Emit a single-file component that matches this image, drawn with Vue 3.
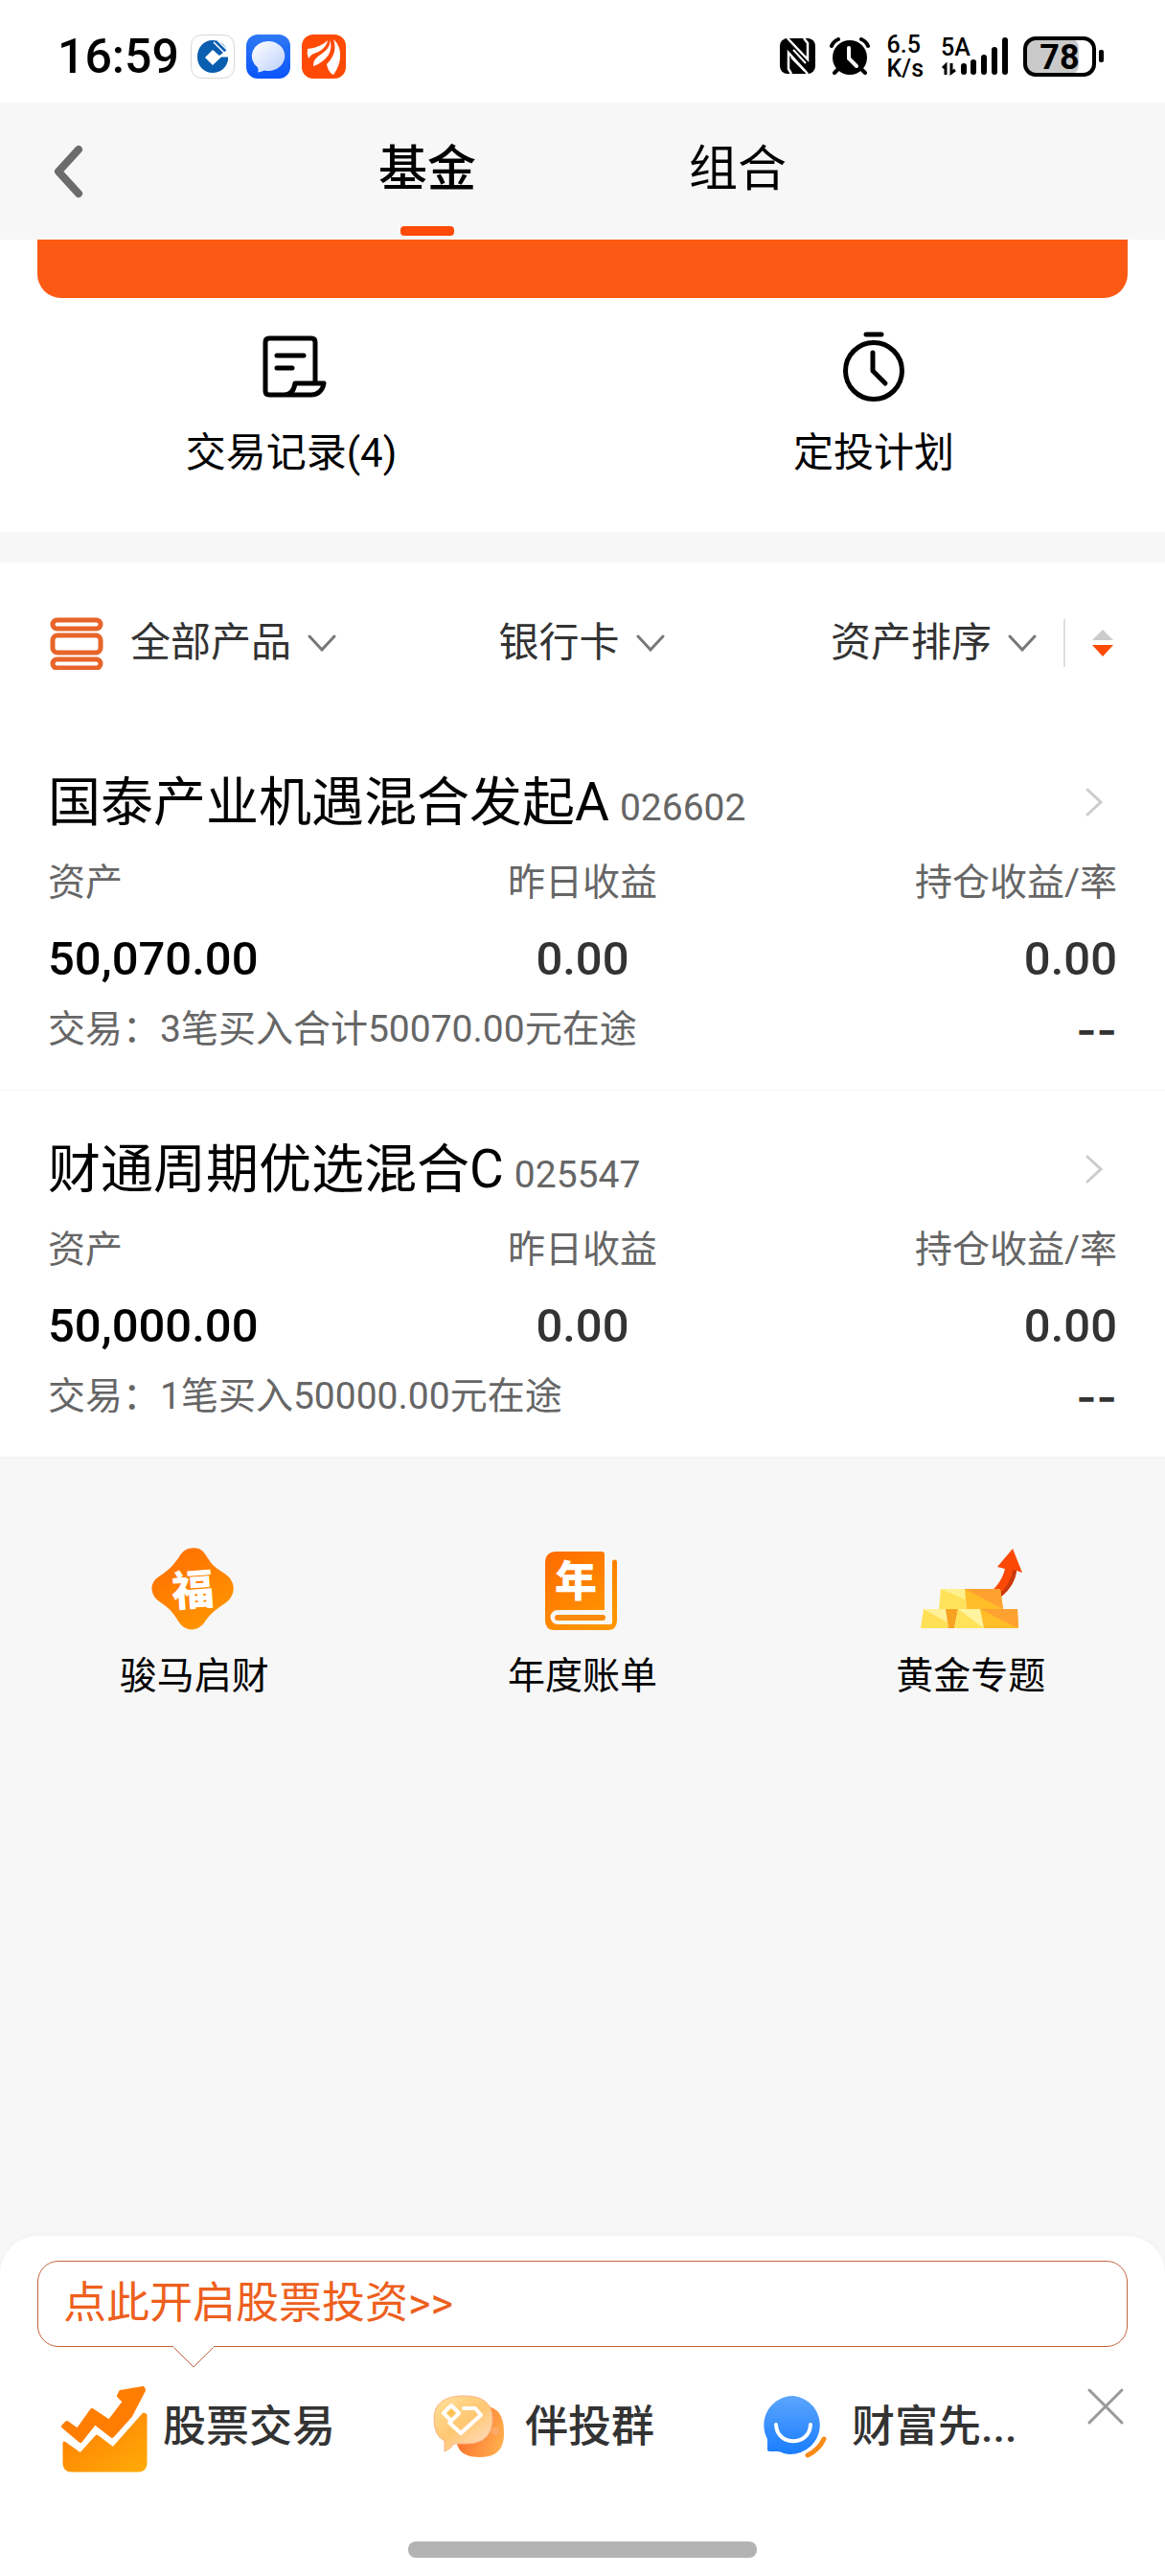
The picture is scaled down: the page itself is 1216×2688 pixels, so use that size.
<script setup>
import { ref } from 'vue'

const tabs = ['基金', '组合']
const activeTab = ref(0)

// 筛选条件
const product = ref('全部产品')
const bank = ref('银行卡')
const sort = ref('资产排序')
const sortDesc = ref(true)

const funds = ref([
  {
    name: '国泰产业机遇混合发起A',
    code: '026602',
    asset: '50,070.00',
    yesterday: '0.00',
    profit: '0.00',
    rate: '--',
    trade: '交易：3笔买入合计50070.00元在途'
  },
  {
    name: '财通周期优选混合C',
    code: '025547',
    asset: '50,000.00',
    yesterday: '0.00',
    profit: '0.00',
    rate: '--',
    trade: '交易：1笔买入50000.00元在途'
  }
])

const showPanel = ref(true)
// 信号格
const bars = [
  { x: 21, y: 33 },
  { x: 31, y: 29 },
  { x: 42, y: 24 },
  { x: 53, y: 16 },
  { x: 64, y: 6 }
]
</script>

<template>
  <div class="page">
    <!-- 状态栏 -->
    <div class="status">
      <div class="status-left">
        <span class="time">16:59</span>
        <svg class="app-icon" viewBox="0 0 46 46">
          <rect x="0.5" y="0.5" width="45" height="45" rx="11" fill="#fff" stroke="#d8d8d8" />
          <path d="M38 16C35 9 29 6 23 6C13 6 7 14 7 23.500C7 33 14 40 23 40C31 40 37 35 39 27V23.500H32L23 32L15 24L23 16L30 22Z" fill="#0a5eb0" />
          <path d="M24 8L35 19M28 6L39 17" stroke="#fff" stroke-width="1.500" />
        </svg>
        <svg class="app-icon" viewBox="0 0 46 46">
          <defs>
            <linearGradient id="msgBg" x1="0" y1="0" x2="0" y2="1">
              <stop offset="0" stop-color="#2f78f4" />
              <stop offset="1" stop-color="#0a55fa" />
            </linearGradient>
            <linearGradient id="msgFg" x1="0" y1="0" x2="1" y2="1">
              <stop offset="0" stop-color="#fff" />
              <stop offset="1" stop-color="#bdd0fb" />
            </linearGradient>
          </defs>
          <rect width="46" height="46" rx="12" fill="url(#msgBg)" />
          <path d="M23 7A17 15.500 0 1 1 19 37.500Q16 39 12 39.500Q13 36 12 34.500A17 15.500 0 0 1 23 7Z" fill="url(#msgFg)" />
        </svg>
        <svg class="app-icon" viewBox="0 0 46 46">
          <rect width="46" height="46" rx="12" fill="#ff4a05" />
          <path d="M6 15C15 14 22 11 27 6C26 14 18 18 15 19C11 20 9 22 7 25Q5 20 6 15Z" fill="#fff" />
          <path d="M29 5C31 13 24 18 18 22C14 25 12 28 12 33C18 31 24 27 28 21C31 16 31 10 29 5Z" fill="#fff" />
          <path d="M33 5C42 12 43 29 33 42C29 40 27 36 26 31C35 22 36 13 33 5Z" fill="#fff" />
        </svg>
      </div>
      <div class="status-right">
        <svg width="38" height="38" viewBox="0 0 38 38">
          <rect x="0" y="0" width="37" height="37" rx="8" fill="#000" />
          <path d="M8 0L29 22V5L25 0M29 37L9 15V32L12 37" fill="none" stroke="#fff" stroke-width="2.500" />
          <path d="M14 12L27 26M12 20L26 34" stroke="#fff" stroke-width="2" />
        </svg>
        <svg width="42" height="40" viewBox="0 0 42 40">
          <circle cx="21" cy="21" r="18" fill="#000" />
          <path d="M2 9Q4 4 9 2M40 9Q38 4 33 2M9 33L5 37M33 33L37 37" stroke="#000" stroke-width="4" stroke-linecap="round" fill="none" />
          <path d="M20 11V22L28 30" stroke="#fff" stroke-width="4" stroke-linecap="round" fill="none" />
        </svg>
        <div class="speed"><span>6.5</span><span>K/s</span></div>
        <svg width="72" height="52" viewBox="0 0 72 52">
          <text x="0" y="25" class="net">5A</text>
          <path d="M5 45V35L2 38M11 33V43L15 40" stroke="#000" stroke-width="3" fill="none" />
          <rect v-for="b in bars" :key="b.x" :x="b.x" :y="b.y" width="6" :height="45 - b.y" rx="3" />
        </svg>
        <svg width="84" height="42" viewBox="0 0 84 42">
          <rect x="3" y="3" width="55" height="36" rx="8" fill="#c9c9c9" />
          <rect x="2" y="2" width="72" height="38" rx="11" fill="none" stroke="#000" stroke-width="4" />
          <rect x="79" y="14" width="5" height="13" rx="2" />
          <text x="38" y="34" class="battery">78</text>
        </svg>
      </div>
    </div>

    <!-- 顶部导航 -->
    <header class="header">
      <button class="back" aria-label="返回">
        <svg width="32" height="56" viewBox="0 0 32 56">
          <path d="M26 5L5 28L26 51" fill="none" stroke="#6b6b6b" stroke-width="8" stroke-linecap="round" stroke-linejoin="round" />
        </svg>
      </button>
      <nav class="tabs">
        <button
          v-for="(tab, index) in tabs"
          :key="tab"
          :class="['tab', activeTab === index ? 'active' : '']"
          @click="activeTab = index"
        >{{ tab }}</button>
      </nav>
    </header>

    <section class="top-card">
      <div class="banner"></div>
      <div class="actions">
        <a href="#" class="action">
          <svg width="74" height="74" viewBox="0 0 74 74" class="line-icon">
            <path d="M62 54V11Q62 7 58 7H14Q10 7 10 11V62Q10 66 14 66H58C65 66 70 61 71 54H41C40 60 37 66 30 66" />
            <path d="M22 25H50M22 38H38" />
          </svg>
          <span>交易记录(4)</span>
        </a>
        <a href="#" class="action">
          <svg width="74" height="74" viewBox="0 0 74 74" class="line-icon">
            <circle cx="37" cy="41" r="29.500" />
            <path d="M29 3H45M36 22V41L49 54" />
          </svg>
          <span>定投计划</span>
        </a>
      </div>
    </section>

    <!-- 筛选 -->
    <section class="filters">
      <div class="filter">
        <svg class="list-icon" width="56" height="56" viewBox="0 0 56 56">
          <rect x="3" y="4" width="50" height="9" rx="4.500" />
          <rect x="3" y="20" width="50" height="18" rx="5" />
          <rect x="3" y="45" width="50" height="9" rx="4.500" />
        </svg>
        <select v-model="product" aria-label="产品">
          <option>全部产品</option>
        </select>
        <svg class="arrow" viewBox="0 0 30 18"><path d="M2 2L15 16L28 2" /></svg>
      </div>
      <div class="filter">
        <select v-model="bank" aria-label="银行卡">
          <option>银行卡</option>
        </select>
        <svg class="arrow" viewBox="0 0 30 18"><path d="M2 2L15 16L28 2" /></svg>
      </div>
      <div class="filter right">
        <select v-model="sort" aria-label="排序">
          <option>资产排序</option>
        </select>
        <svg class="arrow" viewBox="0 0 30 18"><path d="M2 2L15 16L28 2" /></svg>
        <span class="line"></span>
        <button class="order" aria-label="切换顺序" @click="sortDesc = !sortDesc">
          <svg width="22" height="28" viewBox="0 0 22 28">
            <path d="M11 0L22 11H0Z" :fill="sortDesc ? '#cccccc' : '#ff4a05'" />
            <path d="M11 28L0 16H22Z" :fill="sortDesc ? '#ff4a05' : '#cccccc'" />
          </svg>
        </button>
      </div>
    </section>

    <!-- 持仓列表 -->
    <article v-for="item in funds" :key="item.code" class="fund">
      <div class="fund-title">
        <h2>{{ item.name }}</h2>
        <span class="code">{{ item.code }}</span>
        <svg class="more" width="20" height="32" viewBox="0 0 20 32">
          <path d="M3 3L17 16L3 29" />
        </svg>
      </div>
      <dl class="stats">
        <div>
          <dt>资产</dt>
          <dd class="strong">{{ item.asset }}</dd>
        </div>
        <div>
          <dt>昨日收益</dt>
          <dd>{{ item.yesterday }}</dd>
        </div>
        <div>
          <dt>持仓收益/率</dt>
          <dd>{{ item.profit }}</dd>
        </div>
      </dl>
      <div class="trade">
        <span>{{ item.trade }}</span>
        <span class="rate">{{ item.rate }}</span>
      </div>
    </article>

    <!-- 活动入口 -->
    <section class="promos">
      <a href="#" class="promo">
        <svg width="110" height="90" viewBox="0 0 110 90">
          <defs>
            <linearGradient id="orange" x1="0" y1="0" x2="0.600" y2="1">
              <stop offset="0" stop-color="#ff6a00" />
              <stop offset="1" stop-color="#ff9500" />
            </linearGradient>
          </defs>
          <path d="M54.600 4.300C60 4.300 64 7 67 12C72 20 75 24 85 30C100 39 98 54 87 62C76 69 71 74 66 81C59 92 46 92 39 82C34 74 31 69 21 62C7 54 8 40 18 34C30 26 34 21 40 12C43 7 48 4.300 54.600 4.300Z" fill="url(#orange)" />
          <text x="53" y="64" class="glyph" transform="rotate(-4 53 48)">福</text>
        </svg>
        <span>骏马启财</span>
      </a>
      <a href="#" class="promo">
        <svg width="110" height="90" viewBox="0 0 110 90">
          <path d="M28 8H75A3 3 0 0 1 78 11V69H29A7.500 7.500 0 0 0 29 84H84Q86 84 86 82V19A2.500 2.500 0 0 1 91 19V80Q91 90 81 90H26Q16 90 16 80V20Q16 8 28 8Z" fill="url(#orange)" />
          <rect x="26" y="74" width="53" height="6" rx="3" fill="#f98a0c" />
          <text x="48" y="55" class="glyph">年</text>
        </svg>
        <span>年度账单</span>
      </a>
      <a href="#" class="promo">
        <svg width="110" height="90" viewBox="0 0 110 90">
          <path d="M99 5L109 30L103 28C102 38 96 48 87 55L78 48C85 42 89 34 91 26L83 24Z" fill="#fb4804" />
          <path d="M103 28C102 38 96 48 87 55L84 53C93 45 98 37 99 27Z" fill="#c93a0e" />
          <path d="M24 47H49L51 68H22Z" fill="#ffe25a" />
          <path d="M24 47H49L50 58Z" fill="#fff08f" />
          <path d="M49 47H86L89 68H51Z" fill="#ffbd27" />
          <path d="M49 47H86L89 68Z" fill="#ffa131" />
          <path d="M6 68H29L32 88H3Z" fill="#ffdf55" />
          <path d="M6 68H29L31 82Z" fill="#fff19a" />
          <path d="M29 68H42L38 88H32Z" fill="#f7a321" />
          <path d="M42 68H65L69 88H38Z" fill="#ffe25a" />
          <path d="M42 68H65L69 88Z" fill="#fff3a0" />
          <path d="M65 68H104L105 88H69Z" fill="#ffbd27" />
          <path d="M65 68H104L105 88Z" fill="#ffa131" />
        </svg>
        <span>黄金专题</span>
      </a>
    </section>

    <!-- 底部浮层 -->
    <footer class="panel">
      <a v-show="showPanel" href="#" class="tip">
        点此开启股票投资&gt;&gt;
        <svg class="tip-arrow" width="46" height="24" viewBox="0 0 46 24">
          <path d="M1 0L23 22L45 0" fill="#fff" stroke="#c4673c" stroke-width="1" />
          <path d="M2 0H44" stroke="#fff" stroke-width="3" />
        </svg>
      </a>
      <div class="shortcuts">
        <a href="#" class="shortcut">
          <svg width="94" height="94" viewBox="0 0 94 94">
            <defs>
              <linearGradient id="stock" x1="0" y1="0" x2="1" y2="1">
                <stop offset="0" stop-color="#ff7a00" />
                <stop offset="1" stop-color="#ffab08" />
              </linearGradient>
            </defs>
            <path d="M6 46L10 42L21 50L36 29L54 41L70 20L64 14L66 10L89 6L90 8L76 35L57 56L39 42L24 61Z" fill="#ff7d00" stroke="#ff7d00" stroke-width="4" stroke-linejoin="round" />
            <path d="M7 63L24 75L41 56L58 69L90 33L92 34V84Q92 92 84 92H15Q7 92 7 84Z" fill="url(#stock)" stroke="url(#stock)" stroke-width="3" stroke-linejoin="round" />
          </svg>
          <span>股票交易</span>
        </a>
        <a href="#" class="shortcut">
          <svg width="84" height="74" viewBox="0 0 84 74">
            <defs>
              <linearGradient id="back" x1="0" y1="0.300" x2="1" y2="0.700">
                <stop offset="0" stop-color="#fb6628" />
                <stop offset="1" stop-color="#ffb04e" />
              </linearGradient>
              <linearGradient id="front" x1="0" y1="0" x2="0.800" y2="1">
                <stop offset="0" stop-color="#ffe29c" />
                <stop offset="0.550" stop-color="#ffc772" />
                <stop offset="1" stop-color="#ffdcc0" />
              </linearGradient>
            </defs>
            <path d="M60 15Q78 17 78 42Q79 68 53 68Q32 68 29 54Q60 52 60 15Z" fill="url(#back)" />
            <circle cx="69" cy="41" r="4" fill="#ffa868" />
            <path d="M34 4Q66 3 66 28Q66 54 38 54H26Q22 60 16 62Q16 56 16 51Q5 46 5 28Q5 5 34 4Z" fill="url(#front)" stroke="#fbb487" stroke-width="1" />
            <path d="M36 17H48L54 24L33 43L21 32" fill="none" stroke="#fff" stroke-width="4" stroke-linejoin="round" stroke-linecap="round" />
            <path d="M23 14L31 22L23 30L15 22Z" fill="#ffc355" stroke="#fff" stroke-width="4" stroke-linejoin="round" />
          </svg>
          <span>伴投群</span>
        </a>
        <a href="#" class="shortcut">
          <svg width="80" height="74" viewBox="0 0 80 74">
            <defs>
              <linearGradient id="blue" x1="0" y1="0" x2="0" y2="1">
                <stop offset="0" stop-color="#5ba5fd" />
                <stop offset="1" stop-color="#1a7dff" />
              </linearGradient>
            </defs>
            <path d="M35 4A30.500 30.500 0 1 1 25 64Q22 62 18 62H10Q8 62 8 60V49A30.500 30.500 0 0 1 35 4Z" fill="url(#blue)" />
            <path d="M17 34C18 57 52 57 53 34" fill="none" stroke="#fff" stroke-width="4" stroke-linecap="round" />
            <path d="M67 49Q62 60 50 66" fill="none" stroke="#f98a16" stroke-width="5" stroke-linecap="round" />
          </svg>
          <span>财富先...</span>
        </a>
        <button class="close" aria-label="关闭" @click="showPanel = false">
          <svg width="40" height="40" viewBox="0 0 40 40">
            <path d="M3 3L37 37M37 3L3 37" stroke="#999" stroke-width="3" stroke-linecap="round" />
          </svg>
        </button>
      </div>
      <div class="home-bar"></div>
    </footer>
  </div>
</template>

<style>
body {
  margin: 0;
  background: #f7f7f7;
}
</style>

<style scoped>
.page {
  display: flex;
  flex-direction: column;
  min-height: 100vh;
  background: #f7f7f7;
  color: #000;
  font-family: Roboto, "Noto Sans CJK SC", sans-serif;
}

.page * {
  box-sizing: border-box;
}

a {
  color: inherit;
  text-decoration: none;
}

button,
select {
  appearance: none;
  margin: 0;
  padding: 0;
  border: 0;
  background: none;
  font-family: inherit;
  color: inherit;
}

svg {
  display: block;
  flex-shrink: 0;
}

.status {
  display: flex;
  align-items: center;
  justify-content: space-between;
  padding: 11px 64px 0 60px;
  height: 107px;
  background: #fff;
}

.status-left {
  display: flex;
  align-items: center;
  gap: 12px;
}

.time {
  font-size: 50px;
  font-weight: 500;
  line-height: 56px;
}

.app-icon {
  width: 46px;
  height: 46px;
}

.status-right {
  display: flex;
  align-items: center;
  gap: 14px;
}

.speed {
  display: flex;
  flex-direction: column;
  margin: 0 4px;
  font-size: 25px;
  font-weight: 500;
  line-height: 25px;
}

.net {
  font-size: 25px;
  font-weight: 500;
}

.battery {
  font-size: 36px;
  font-weight: 700;
  text-anchor: middle;
}

.header {
  display: grid;
  grid-template-columns: 1fr auto 1fr;
  align-items: center;
}

.back {
  justify-self: start;
  margin-left: 56px;
}

.tabs {
  display: flex;
  gap: 222px;
}

.tab {
  display: flex;
  flex-direction: column;
  align-items: center;
  padding: 38px 0 4px;
  font-size: 51px;
  line-height: 64px;
}

.tab::after {
  content: "";
  width: 56px;
  height: 10px;
  margin-top: 27px;
  border-radius: 4px;
}

.active {
  font-weight: 500;
}

.active::after {
  background: #ff4a05;
}

.top-card {
  padding-bottom: 52px;
  background: #fff;
}

.banner {
  height: 61px;
  margin: 0 39px;
  border-radius: 0 0 25px 25px;
  background: #fc5a14;
}

.actions {
  display: flex;
  margin-top: 35px;
}

.action {
  display: flex;
  flex: 1;
  flex-direction: column;
  align-items: center;
  gap: 23px;
  font-size: 42px;
  line-height: 60px;
}

.line-icon {
  fill: none;
  stroke: #000;
  stroke-width: 5;
  stroke-linecap: round;
  stroke-linejoin: round;
}

.filters {
  display: grid;
  grid-template-columns: 1fr auto 1fr;
  margin-top: 32px;
  padding: 52px 54px 52px 52px;
  background: #fff;
}

.filter {
  display: flex;
  align-items: center;
  gap: 16px;
  height: 64px;
}

.right {
  justify-content: flex-end;
}

.filter select {
  font-size: 42px;
  line-height: 60px;
  color: #333;
}

.list-icon {
  margin-right: 12px;
  fill: #fff;
  stroke: #e8642a;
  stroke-width: 5;
}

.arrow {
  width: 30px;
  height: 18px;
}

.arrow path {
  fill: none;
  stroke: #777;
  stroke-width: 3;
  stroke-linecap: round;
}

.line {
  width: 2px;
  height: 50px;
  margin: 0 12px;
  background: #ddd;
}

.fund {
  padding: 50px 50px 35px;
  border-bottom: 1px solid #f4f4f4;
  background: #fff;
}

.fund-title {
  display: flex;
  align-items: baseline;
  gap: 11px;
}

.fund-title h2 {
  margin: 0;
  font-size: 55px;
  font-weight: 400;
  line-height: 64px;
}

.code {
  font-size: 39px;
  line-height: 48px;
  color: #666;
}

.more {
  align-self: center;
  margin-right: 14px;
  margin-left: auto;
  fill: none;
  stroke: #ccc;
  stroke-width: 3;
  stroke-linecap: round;
}

.stats {
  display: grid;
  grid-template-columns: 1fr 1fr 1fr;
  margin: 24px 0 15px;
  text-align: center;
}

.stats div:first-child {
  text-align: left;
}

.stats div:last-child {
  text-align: right;
}

.stats dt {
  font-size: 39px;
  line-height: 56px;
  color: #666;
}

.stats dd {
  margin: 22px 0 0;
  font-size: 49px;
  font-weight: 500;
  line-height: 60px;
  color: #333;
}

.stats .strong {
  color: #000;
}

.trade {
  display: flex;
  justify-content: space-between;
  font-size: 39px;
  line-height: 56px;
  color: #666;
}

.rate {
  font-family: Inter, sans-serif;
  font-size: 46px;
  font-weight: 600;
  color: #333;
}

.promos {
  display: flex;
  flex: 1;
  padding-top: 90px;
}

.promo {
  display: flex;
  flex: 1;
  flex-direction: column;
  align-items: center;
  gap: 20px;
  font-size: 39px;
  line-height: 56px;
}

.glyph {
  font-size: 44px;
  font-weight: 900;
  fill: #fff;
  text-anchor: middle;
}

.panel {
  padding: 26px 39px 19px;
  border-radius: 40px 40px 0 0;
  background: #fff;
  box-shadow: 0 -2px 6px rgba(0, 0, 0, 0.02);
}

.tip {
  display: block;
  position: relative;
  padding: 12px 26px;
  border: 1px solid #c4673c;
  border-radius: 22px;
  font-size: 45px;
  line-height: 64px;
  color: #ee5f1d;
}

.tip-arrow {
  position: absolute;
  top: 100%;
  left: 139px;
}

.shortcuts {
  display: grid;
  grid-template-columns: 388fr 345fr 341fr auto;
  align-items: center;
  margin: 37px 3px 72px 21px;
}

.shortcut {
  display: flex;
  align-items: center;
  gap: 16px;
  font-size: 45px;
  font-weight: 500;
  line-height: 64px;
  color: #333;
  white-space: nowrap;
}

.close {
  align-self: start;
  margin-top: 5px;
}

.home-bar {
  width: 32%;
  height: 17px;
  margin: 0 auto;
  border-radius: 8px;
  background: #b3b3b3;
}
</style>
